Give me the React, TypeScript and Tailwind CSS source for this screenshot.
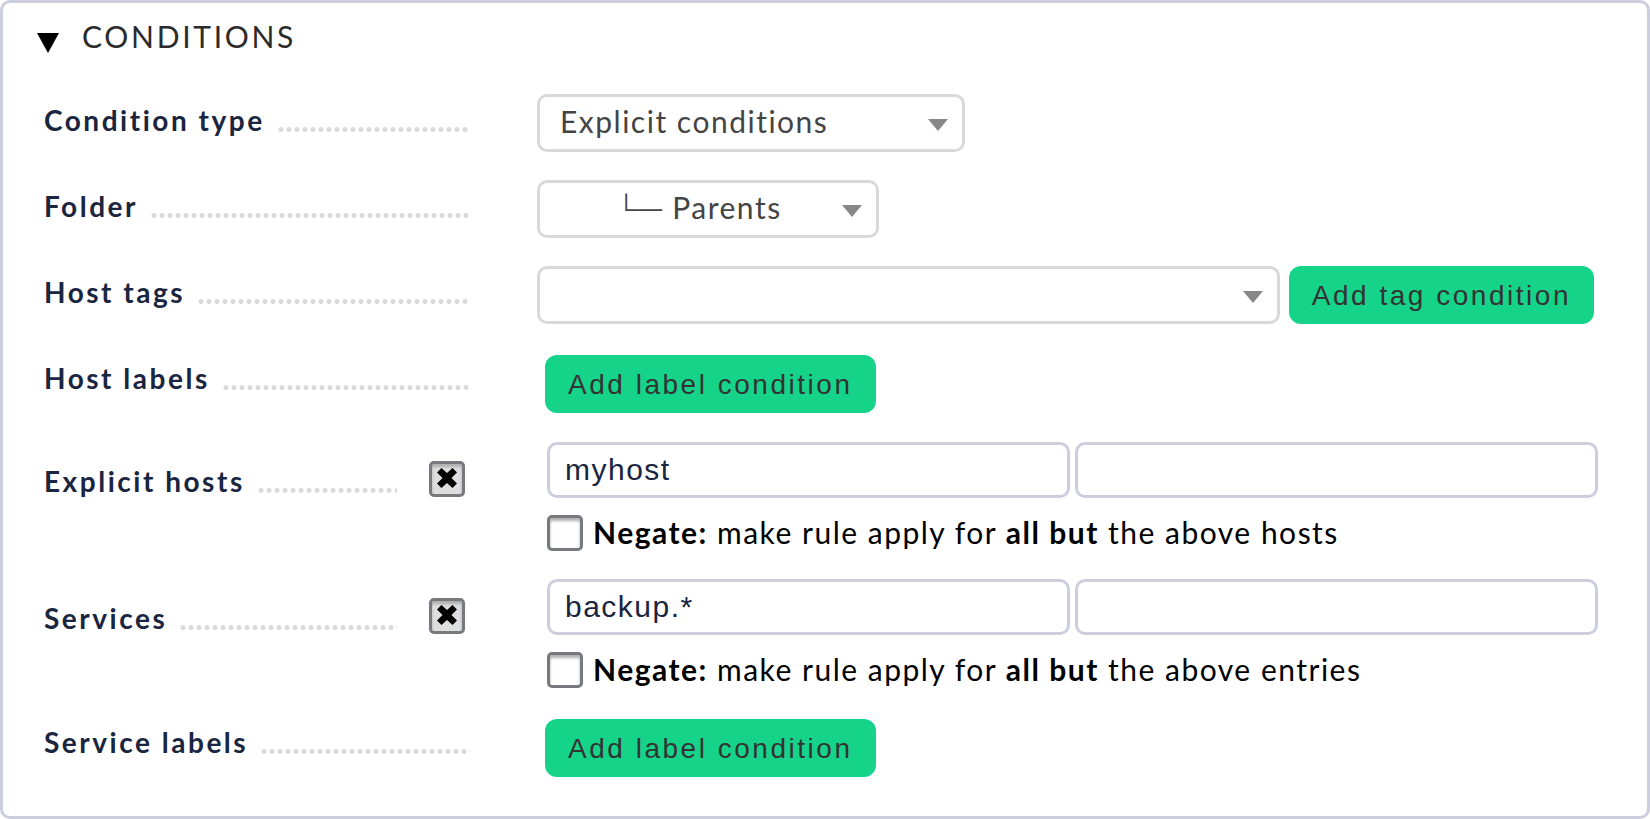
import { useState, type ReactNode, type SelectHTMLAttributes, type InputHTMLAttributes } from "react";

function Row({
  label,
  htmlFor,
  option,
  tall = false,
  children,
}: {
  label: string;
  htmlFor: string;
  option?: ReactNode;
  tall?: boolean;
  children: ReactNode;
}) {
  return (
    <div className="flex items-start gap-[67px]">
      <div className={`flex w-[426px] shrink-0 items-start ${tall ? "pt-[19px]" : "pt-1.5"}`}>
        <label htmlFor={htmlFor} className="shrink-0 text-[28px] leading-10 font-bold tracking-[0.09em] text-[#1a2540]">
          {label}
        </label>
        <span className="mt-[27px] ml-3 h-[5px] flex-1 bg-[radial-gradient(circle,#dadada_2px,transparent_3px)] bg-[length:8px_5px] bg-repeat-x" />
        {option}
      </div>
      <div className="min-w-0 flex-1">{children}</div>
    </div>
  );
}

function Select({ wrap, children, ...rest }: { wrap: string; children: ReactNode } & SelectHTMLAttributes<HTMLSelectElement>) {
  return (
    <div className={`relative ${wrap}`}>
      <select
        {...rest}
        className="block h-[58px] w-full appearance-none rounded-[10px] border-[3px] border-[#d9d9d9] bg-white pr-12 pb-1 pl-5 text-[30px] tracking-wider text-[#444]"
      >
        {children}
      </select>
      <svg viewBox="0 0 20 12" className="pointer-events-none absolute top-[25px] right-[17px] h-3 w-5" aria-hidden="true">
        <path d="M0 0h20L10 12z" fill="#888" />
      </svg>
    </div>
  );
}

function Checkbox(props: InputHTMLAttributes<HTMLInputElement>) {
  return (
    <span className="relative block size-9 shrink-0">
      <input
        type="checkbox"
        {...props}
        className="peer block size-9 appearance-none rounded-[5px] border-[3px] border-[#76797d] bg-white shadow-[inset_0_3px_3px_#b0b0b0] checked:bg-[#dedede]"
      />
      <svg
        viewBox="0 0 20 20"
        className="pointer-events-none absolute top-[7px] left-2 hidden size-5 peer-checked:block"
        aria-hidden="true"
      >
        <path d="M4.500 0 10 5 15.500 0 20 4.500 14.500 10 20 15.500 15.500 20 10 15 4.500 20 0 15.500 5.500 10 0 4.500z" fill="#000" />
      </svg>
    </span>
  );
}

function GreenButton({ id, children }: { id: string; children: ReactNode }) {
  return (
    <button
      id={id}
      type="button"
      className="block h-[58px] shrink-0 rounded-xl bg-[#15d48a] px-[23px] pt-0.5 font-['Liberation_Sans',Arial,sans-serif] text-[28px] tracking-[0.09em] whitespace-nowrap text-[#333]"
    >
      {children}
    </button>
  );
}

function ListEntry({ id, first, what, noun }: { id: string; first: string; what: string; noun: string }) {
  const [values, setValues] = useState([first, ""]);
  return (
    <div className="pl-2.5">
      <div className="flex gap-[5px]">
        {values.map((value, i) => (
          <input
            key={i}
            id={`${id}-${i}`}
            type="text"
            aria-label={`${what} ${i + 1}`}
            value={value}
            onChange={(e) => setValues(values.map((v, j) => (j === i ? e.target.value : v)))}
            className="h-14 min-w-0 flex-1 rounded-[10px] border-[3px] border-[#cccedd] bg-white px-[15px] font-['Liberation_Sans',Arial,sans-serif] text-[30px] tracking-wider text-[#1a2540]"
          />
        ))}
      </div>
      <div className="mt-[17px] flex items-start gap-2.5">
        <Checkbox id={`${id}-negate`} />
        <label htmlFor={`${id}-negate`} className="text-[30px] leading-[34px] tracking-wider text-black">
          <b>Negate:</b> make rule apply for <b>all but</b> the above {noun}
        </label>
      </div>
    </div>
  );
}

export default function App() {
  const [open, setOpen] = useState(true);
  return (
    <section className="min-h-screen rounded-[10px] border-[3px] border-[#cccedd] bg-white pt-[15px] pr-[49px] pb-[38px] pl-[41px] font-[Lato,sans-serif]">
      <h2>
        <button
          type="button"
          aria-expanded={open}
          onClick={() => setOpen(!open)}
          className="-ml-2 flex items-start gap-[23px] text-[30px] leading-9 tracking-[0.09em] text-[#2b2b2b]"
        >
          <svg viewBox="0 0 22 20" className="mt-[15px] ml-px h-5 w-[22px]" aria-hidden="true">
            <path d={open ? "M0 0h22L11 20z" : "M1 0v20L21 10z"} fill="#000" />
          </svg>
          CONDITIONS
        </button>
      </h2>
      {open && (
        <div className="mt-10 flex flex-col gap-7">
          <Row label="Condition type" htmlFor="condition-type">
            <Select id="condition-type" wrap="w-[428px]">
              <option>Explicit conditions</option>
            </Select>
          </Row>
          <Row label="Folder" htmlFor="folder">
            <Select id="folder" wrap="w-[342px]">
              <option>{"\u00a0\u00a0\u00a0\u00a0\u00a0\u00a0└─ Parents"}</option>
            </Select>
          </Row>
          <Row label="Host tags" htmlFor="host-tags">
            <div className="flex gap-[9px] pr-1">
              <Select id="host-tags" wrap="min-w-0 flex-1">
                <option></option>
              </Select>
              <GreenButton id="add-tag">Add tag condition</GreenButton>
            </div>
          </Row>
          <Row label="Host labels" htmlFor="add-host-label">
            <div className="pt-[3px] pb-px pl-2">
              <GreenButton id="add-host-label">Add label condition</GreenButton>
            </div>
          </Row>
          <Row
            label="Explicit hosts"
            htmlFor="use-hosts"
            tall
            option={
              <span className="mr-[5px] ml-8">
                <Checkbox id="use-hosts" defaultChecked />
              </span>
            }
          >
            <ListEntry id="hosts" first="myhost" what="Host" noun="hosts" />
          </Row>
          <Row
            label="Services"
            htmlFor="use-services"
            tall
            option={
              <span className="mr-[5px] ml-8">
                <Checkbox id="use-services" defaultChecked />
              </span>
            }
          >
            <ListEntry id="services" first="backup.*" what="Service" noun="entries" />
          </Row>
          <Row label="Service labels" htmlFor="add-service-label">
            <div className="pt-[3px] pb-px pl-2">
              <GreenButton id="add-service-label">Add label condition</GreenButton>
            </div>
          </Row>
        </div>
      )}
    </section>
  );
}
